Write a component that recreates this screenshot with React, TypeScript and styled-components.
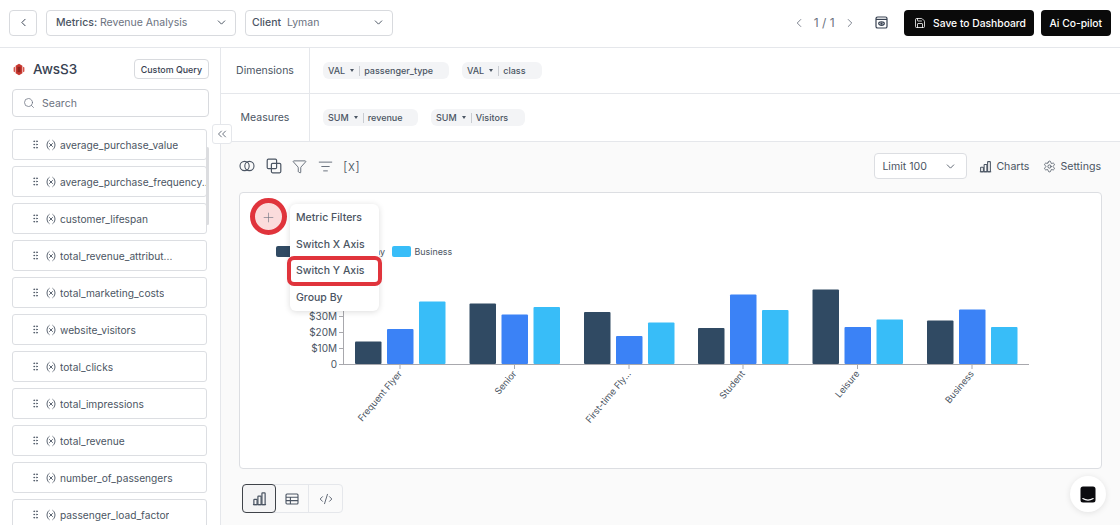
import { ReactNode } from "react"
import styled, { createGlobalStyle } from "styled-components"
import {
  ChevronDown,
  ChevronLeft,
  ChevronRight,
  ChevronsLeft,
  CodeXml,
  Funnel,
  GripVertical,
  ListFilter,
  Plus,
  Save,
  Search,
  Settings,
  Variable
} from "lucide-react"

const metrics = [
  "average_purchase_value",
  "average_purchase_frequency...",
  "customer_lifespan",
  "total_revenue_attribut...",
  "total_marketing_costs",
  "website_visitors",
  "total_clicks",
  "total_impressions",
  "total_revenue",
  "number_of_passengers",
  "passenger_load_factor"
]

const DARK = "#304a63"
const BLUE = "#3b82f6"
const SKY = "#38bdf8"

// x of the first bar and top of each bar, in page coordinates
const groups = [
  { label: "Frequent Flyer", x: 355, tick: 400, tops: [341.5, 329, 301.5] },
  { label: "Senior", x: 469.5, tick: 514.5, tops: [303.5, 314.5, 307] },
  { label: "First-time Fly...", x: 584, tick: 629, tops: [312, 336, 322.5] },
  { label: "Student", x: 698, tick: 743, tops: [328, 294.5, 310] },
  { label: "Leisure", x: 812.5, tick: 857.5, tops: [289.5, 327, 319.5] },
  { label: "Business", x: 927, tick: 972, tops: [320.5, 309.5, 327] }
]

const yTicks = [
  { label: "0", y: 364.5 },
  { label: "$10M", y: 348.5 },
  { label: "$20M", y: 332.5 },
  { label: "$30M", y: 316.5 }
]

function Chart() {
  return (
    <ChartSvg viewBox="240 193 861 275">
      <rect x="276" y="246" width="19" height="11" rx="2" fill={DARK} />
      <text x="385" y="255" fontSize="9" textAnchor="end" fill="#4b5563">Economy</text>
      <rect x="392" y="246" width="19" height="11" rx="2" fill={SKY} />
      <text x="414.5" y="255" fontSize="8.9" fill="#4b5563">Business</text>

      <line x1="343.5" y1="260" x2="343.5" y2="365" stroke="#a8a8ad" />
      <line x1="343" y1="364.5" x2="1029" y2="364.5" stroke="#a8a8ad" />
      {yTicks.map((t) => (
        <g key={t.label}>
          <line x1="339" y1={t.y} x2="343" y2={t.y} stroke="#a8a8ad" />
          <text x="337" y={t.y + 3.5} fontSize="10" textAnchor="end" fill="#4b5563">{t.label}</text>
        </g>
      ))}
      {groups.map((g) => (
        <g key={g.label}>
          {g.tops.map((top, i) => (
            <rect
              key={i}
              x={g.x + i * 32}
              y={top}
              width="26.5"
              height={364 - top}
              rx="1"
              fill={[DARK, BLUE, SKY][i]}
            />
          ))}
          <line x1={g.tick} y1="365" x2={g.tick} y2="369" stroke="#a8a8ad" />
          <text
            transform={`translate(${g.tick + 2.5} 374) rotate(-50)`}
            fontSize="9.2"
            textAnchor="end"
            fill="#4b5563"
          >
            {g.label}
          </text>
        </g>
      ))}
    </ChartSvg>
  )
}

function JoinIcon() {
  return (
    <svg width="16" height="16" viewBox="0 0 16 16" fill="none" stroke="currentColor" strokeWidth="1.1">
      <circle cx="5.6" cy="8" r="4.6" />
      <circle cx="10.4" cy="8" r="4.6" />
    </svg>
  )
}

function OverlapIcon() {
  return (
    <svg width="16" height="16" viewBox="0 0 16 16" fill="none" stroke="currentColor" strokeWidth="1.2">
      <rect x="1.2" y="1.2" width="9.4" height="9.4" rx="1.2" />
      <rect x="5.4" y="5.4" width="9.4" height="9.4" rx="1.2" />
    </svg>
  )
}

function BarsIcon({ size }: { size: number }) {
  return (
    <svg width={size} height={size} viewBox="0 0 16 16" fill="none" stroke="currentColor" strokeWidth="1.3">
      <path d="M1 14.5h14" />
      <rect x="2" y="9" width="3.4" height="5.5" rx="0.6" />
      <rect x="6.3" y="5.5" width="3.4" height="9" rx="0.6" />
      <rect x="10.6" y="2" width="3.4" height="12.5" rx="0.6" />
    </svg>
  )
}

function TableIcon() {
  return (
    <svg width="14" height="14" viewBox="0 0 14 14" fill="none" stroke="currentColor" strokeWidth="1.1">
      <rect x="1" y="2" width="12" height="10" rx="1" />
      <path d="M1 5.2h12M1 8.6h12M5.4 5.2V12" />
    </svg>
  )
}

function PreviewIcon() {
  return (
    <svg width="13" height="13" viewBox="0 0 13 13" fill="none" stroke="currentColor" strokeWidth="1.2">
      <rect x="1" y="1" width="11" height="11" rx="1.6" />
      <path d="M1 3.4h11" />
      <ellipse cx="6.5" cy="7.6" rx="2.8" ry="1.7" />
      <circle cx="6.5" cy="7.6" r="0.6" fill="currentColor" />
    </svg>
  )
}

function AwsIcon() {
  return (
    <svg width="12" height="13" viewBox="0 0 12 13">
      <path d="M6 .8l3.4 2v7.4L6 12.200l-3.400-2V2.800z" fill="#c8372f" />
      <path d="M4.500 3.800h3v5.400h-3z" fill="#8f231d" />
      <path d="M.6 4.600l1.400-.8v5.400l-1.400-.8zM11.400 4.600l-1.400-.8v5.400l1.400-.8z" fill="#d8544b" />
    </svg>
  )
}

function MessengerIcon() {
  return (
    <svg width="16" height="17" viewBox="0 0 16 17">
      <path
        d="M3 .5h10A2.500 2.500 0 0 1 15.500 3v11A2.500 2.500 0 0 1 13 16.500H3A2.500 2.500 0 0 1 .5 14V3A2.500 2.500 0 0 1 3 .5z"
        fill="#0b0b0f"
      />
      <path d="M2.800 12.600c3 1.700 7.400 1.700 10.400 0" fill="none" stroke="#fff" strokeWidth="1.100" strokeLinecap="round" />
    </svg>
  )
}

function Chip({ agg, name, width }: { agg: string; name: string; width: number }) {
  return (
    <ChipBox $width={width}>
      {agg}
      <Caret />
      <ChipBar />
      {name}
    </ChipBox>
  )
}

function DropField({ children, width, inset }: { children: ReactNode; width: number; inset: number }) {
  return (
    <SelectBox $width={width} $inset={inset}>
      <SelectText>{children}</SelectText>
      <ChevronDown size={13} strokeWidth={1.8} />
    </SelectBox>
  )
}

function App() {
  return (
    <Page>
      <GlobalStyle />
      <Header>
        <BackButton>
          <ChevronLeft size={13} strokeWidth={1.8} />
        </BackButton>
        <DropField width={190} inset={9}>
          <b>Metrics:</b> Revenue Analysis
        </DropField>
        <DropField width={148} inset={6}>
          <b>Client</b>&nbsp; Lyman
        </DropField>
        <HeaderRight>
          <Pager>
            <ChevronLeft size={14} strokeWidth={1.5} />
            <span>1 / 1</span>
            <ChevronRight size={14} strokeWidth={1.5} />
          </Pager>
          <PreviewSlot>
            <PreviewIcon />
          </PreviewSlot>
          <SaveButton>
            <Save size={12} strokeWidth={1.6} />
            Save to Dashboard
          </SaveButton>
          <CopilotButton>Ai Co-pilot</CopilotButton>
        </HeaderRight>
      </Header>

      <Body>
        <Sidebar>
          <SourceRow>
            <SourceName>
              <AwsIcon />
              AwsS3
            </SourceName>
            <CustomQuery>Custom Query</CustomQuery>
          </SourceRow>
          <SearchBox>
            <Search size={12} strokeWidth={1.5} />
            Search
          </SearchBox>
          <MetricList>
            {metrics.map((m) => (
              <MetricItem key={m}>
                <GripVertical size={11} strokeWidth={1.8} />
                <Variable size={12} strokeWidth={1.8} />
                <MetricName>{m}</MetricName>
              </MetricItem>
            ))}
          </MetricList>
          <ScrollThumb />
          <CollapseButton>
            <ChevronsLeft size={14} strokeWidth={1.4} />
          </CollapseButton>
        </Sidebar>

        <Main>
          <FieldRow $height={46}>
            <FieldLabel>Dimensions</FieldLabel>
            <ChipList>
              <Chip agg="VAL" name="passenger_type" width={126} />
              <Chip agg="VAL" name="class" width={80} />
            </ChipList>
          </FieldRow>
          <FieldRow $height={48}>
            <FieldLabel>Measures</FieldLabel>
            <ChipList>
              <Chip agg="SUM" name="revenue" width={95} />
              <Chip agg="SUM" name="Visitors" width={94} />
            </ChipList>
          </FieldRow>

          <Workspace>
            <Toolbar>
              <ToolIcons>
                <JoinIcon />
                <OverlapIcon />
                <Funnel size={15} strokeWidth={1.3} />
                <ListFilter size={15} strokeWidth={1.3} />
                <VarText>[x]</VarText>
              </ToolIcons>
              <ToolRight>
                <LimitBox>
                  <span>Limit 100</span>
                  <ChevronDown size={13} strokeWidth={1.6} />
                </LimitBox>
                <ToolLink>
                  <BarsIcon size={13} />
                  Charts
                </ToolLink>
                <ToolLink>
                  <Settings size={13} strokeWidth={1.5} />
                  Settings
                </ToolLink>
              </ToolRight>
            </Toolbar>

            <ChartCard>
              <Chart />
              <AddButton>
                <Plus size={15} strokeWidth={1} />
              </AddButton>
              <Menu>
                <MenuItem>Metric Filters</MenuItem>
                <MenuItem>Switch X Axis</MenuItem>
                <MenuItem $marked>Switch Y Axis</MenuItem>
                <MenuItem>Group By</MenuItem>
              </Menu>
            </ChartCard>

            <ViewTabs>
              <ViewTab $active $width={34}>
                <BarsIcon size={15} />
              </ViewTab>
              <ViewTab $width={33}>
                <TableIcon />
              </ViewTab>
              <ViewTab $width={34}>
                <CodeXml size={14} strokeWidth={1.5} />
              </ViewTab>
            </ViewTabs>
          </Workspace>
        </Main>
      </Body>

      <Messenger>
        <MessengerIcon />
      </Messenger>
    </Page>
  )
}

const GlobalStyle = createGlobalStyle`
  html, body {
    margin: 0;
    padding: 0;
    background: #fff;
    overflow: hidden;
  }
  body {
    font-family: Inter, "Liberation Sans", sans-serif;
    color: #374151;
  }
  *, *::before, *::after {
    box-sizing: border-box;
  }
`

const Page = styled.div`
  position: relative;
  width: 1120px;
  height: 525px;
  overflow: hidden;
`

const Header = styled.header`
  display: flex;
  align-items: center;
  gap: 9px;
  height: 48px;
  padding: 0 9px 2px;
  border-bottom: 1px solid #e5e7eb;
`

const BackButton = styled.div`
  display: flex;
  align-items: center;
  justify-content: center;
  width: 28px;
  height: 26px;
  border: 1px solid #d8dade;
  border-radius: 4px;
  color: #374151;
`

const SelectBox = styled.div<{ $width: number; $inset: number }>`
  display: flex;
  align-items: center;
  justify-content: space-between;
  width: ${(p) => p.$width}px;
  height: 26px;
  padding: 0 7px 0 ${(p) => p.$inset}px;
  border: 1px solid #d8dade;
  border-radius: 4px;
  color: #4b5563;
`

const SelectText = styled.span`
  font-size: 10.5px;
  color: #6b7280;
  white-space: nowrap;

  b {
    font-weight: 500;
    color: #4b5563;
  }
`

const HeaderRight = styled.div`
  display: flex;
  align-items: center;
  margin-left: auto;
`

const Pager = styled.div`
  display: flex;
  align-items: center;
  gap: 8px;
  margin-right: 18px;
  font-size: 12px;
  color: #6b7280;
`

const PreviewSlot = styled.div`
  display: flex;
  margin-right: 16px;
  color: #374151;
`

const SaveButton = styled.div`
  display: flex;
  align-items: center;
  gap: 7px;
  height: 26px;
  padding: 0 8px 0 10.5px;
  border-radius: 4px;
  background: #0a0a0a;
  color: #fff;
  font-size: 10.3px;
  font-weight: 500;
  white-space: nowrap;
`

const CopilotButton = styled(SaveButton)`
  margin-left: 6.5px;
  padding: 0 9px;
`

const Body = styled.div`
  display: flex;
  height: 477px;
`

const Sidebar = styled.aside`
  position: relative;
  flex: none;
  width: 221px;
  padding: 11px 11px 0 12px;
  border-right: 1px solid #e5e7eb;
`

const SourceRow = styled.div`
  display: flex;
  align-items: center;
  justify-content: space-between;
  height: 20px;
  margin-bottom: 10px;
`

const SourceName = styled.div`
  display: flex;
  align-items: center;
  gap: 8px;
  margin-left: 1px;
  font-size: 13.5px;
  font-weight: 500;
  color: #374151;
`

const CustomQuery = styled.div`
  display: flex;
  align-items: center;
  height: 20px;
  padding: 0 6px;
  border: 1px solid #d8dade;
  border-radius: 4px;
  font-size: 8.9px;
  font-weight: 500;
`

const SearchBox = styled.div`
  display: flex;
  align-items: center;
  gap: 7px;
  height: 28px;
  margin-bottom: 12px;
  padding: 0 10px;
  border: 1px solid #d8dade;
  border-radius: 4px;
  font-size: 10.5px;
  color: #6b7280;
`

const MetricList = styled.div`
  display: flex;
  flex-direction: column;
  gap: 6px;
  width: 195px;
`

const MetricItem = styled.div`
  display: flex;
  flex: none;
  align-items: center;
  gap: 3.5px;
  height: 31px;
  padding-left: 17px;
  border: 1px solid #dcdee2;
  border-radius: 3px;
  color: #4b5563;

  svg {
    flex: none;
  }
`

const MetricName = styled.span`
  overflow: hidden;
  font-size: 10.2px;
  white-space: nowrap;
`

const ScrollThumb = styled.div`
  position: absolute;
  top: 99px;
  left: 206px;
  width: 3px;
  height: 78px;
  border-radius: 2px;
  background: #dcdde0;
`

const CollapseButton = styled.div`
  position: absolute;
  top: 76px;
  left: 212px;
  display: flex;
  align-items: center;
  justify-content: center;
  width: 20px;
  height: 20px;
  border: 1px solid #e5e7eb;
  border-radius: 3px;
  background: #fff;
  color: #4b5563;
  z-index: 2;
`

const Main = styled.main`
  display: flex;
  flex: 1;
  flex-direction: column;
  min-width: 0;
`

const FieldRow = styled.div<{ $height: number }>`
  display: flex;
  flex: none;
  height: ${(p) => p.$height}px;
  border-bottom: 1px solid #e5e7eb;
`

const FieldLabel = styled.div`
  display: flex;
  align-items: center;
  justify-content: center;
  flex: none;
  width: 89px;
  border-right: 1px solid #e5e7eb;
  font-size: 10.5px;
  color: #4b5563;
`

const ChipList = styled.div`
  display: flex;
  align-items: center;
  gap: 13px;
  padding-left: 13px;
`

const ChipBox = styled.div<{ $width: number }>`
  display: flex;
  align-items: center;
  width: ${(p) => p.$width}px;
  height: 17px;
  padding-left: 5px;
  border-radius: 6px;
  background: #f3f4f6;
  font-size: 9px;
  font-weight: 500;
  color: #4b5563;
  white-space: nowrap;
`

const Caret = styled.span`
  width: 0;
  height: 0;
  margin-left: 5px;
  border-top: 3px solid #4b5563;
  border-right: 2.5px solid transparent;
  border-left: 2.5px solid transparent;
`

const ChipBar = styled.span`
  width: 1px;
  height: 10px;
  margin: 0 4px 0 5px;
  background: #c9ccd1;
`

const Workspace = styled.div`
  flex: 1;
  padding: 11px 18px 0;
  background: #fafafa;
`

const Toolbar = styled.div`
  display: flex;
  align-items: center;
  justify-content: space-between;
  height: 26px;
  margin-bottom: 13px;
`

const ToolIcons = styled.div`
  display: flex;
  align-items: center;
  gap: 10.5px;
  color: #4b5563;
`

const VarText = styled.span`
  font-size: 13px;
  font-weight: 300;
  letter-spacing: 0.4px;
  color: #4b5563;
`

const ToolRight = styled.div`
  display: flex;
  align-items: center;
  gap: 14px;
  margin-right: 1px;
`

const LimitBox = styled.div`
  display: flex;
  align-items: center;
  justify-content: space-between;
  width: 93px;
  height: 26px;
  margin-right: -2px;
  padding: 0 9px 0 7px;
  border: 1px solid #dcdee2;
  border-radius: 4px;
  background: #fff;
  font-size: 10.6px;
  color: #4b5563;
`

const ToolLink = styled.div`
  display: flex;
  align-items: center;
  gap: 4px;
  font-size: 10.6px;
  color: #4b5563;
`

const ChartCard = styled.div`
  position: relative;
  height: 277px;
  border: 1px solid #dcdee2;
  border-radius: 4px;
  background: #fff;
`

const ChartSvg = styled.svg`
  display: block;
  width: 100%;
  height: 100%;
  font-family: Inter, "Liberation Sans", sans-serif;
`

const AddButton = styled.div`
  position: absolute;
  top: 5px;
  left: 10px;
  display: flex;
  align-items: center;
  justify-content: center;
  width: 37px;
  height: 37px;
  padding-top: 2px;
  border: 5px solid #e0343c;
  border-radius: 50%;
  background: #fbdcdc;
  color: #6b7280;
`

const Menu = styled.div`
  position: absolute;
  top: 11px;
  left: 50px;
  width: 89px;
  height: 107px;
  padding: 0 6px;
  border-radius: 6px;
  background: #fff;
  box-shadow: 0 1px 6px rgba(0, 0, 0, 0.14);
`

const MenuItem = styled.div<{ $marked?: boolean }>`
  position: relative;
  display: flex;
  align-items: center;
  height: 26.75px;
  font-size: 10.5px;
  font-weight: 500;
  color: #4b5563;
  white-space: nowrap;

  ${(p) =>
    p.$marked &&
    `
    &::after {
      content: "";
      position: absolute;
      top: -2px;
      left: -9px;
      width: 95px;
      height: 30px;
      border: 4px solid #e0343c;
      border-radius: 7px;
    }
  `}
`

const ViewTabs = styled.div`
  display: flex;
  width: 101px;
  height: 29px;
  margin: 15px 0 0 3px;
  border: 1px solid #e5e7eb;
  border-radius: 4px;
`

const ViewTab = styled.div<{ $active?: boolean; $width: number }>`
  display: flex;
  align-items: center;
  justify-content: center;
  flex: none;
  width: ${(p) => p.$width}px;
  margin: ${(p) => (p.$active ? "-1px 0 -1px -1px" : "0")};
  border: ${(p) => (p.$active ? "1px solid #3f4349" : "none")};
  border-right: ${(p) => (p.$active ? "1px solid #3f4349" : "1px solid #e5e7eb")};
  border-radius: ${(p) => (p.$active ? "4px" : "0")};
  background: ${(p) => (p.$active ? "#f4f4f5" : "transparent")};
  color: #4b5563;

  &:last-child {
    border-right: none;
  }
`

const Messenger = styled.div`
  position: absolute;
  top: 476px;
  left: 1069.5px;
  display: flex;
  align-items: center;
  justify-content: center;
  width: 36px;
  height: 36px;
  border-radius: 50%;
  background: #fff;
  box-shadow: 0 1px 6px rgba(0, 0, 0, 0.1);
`

export default App
